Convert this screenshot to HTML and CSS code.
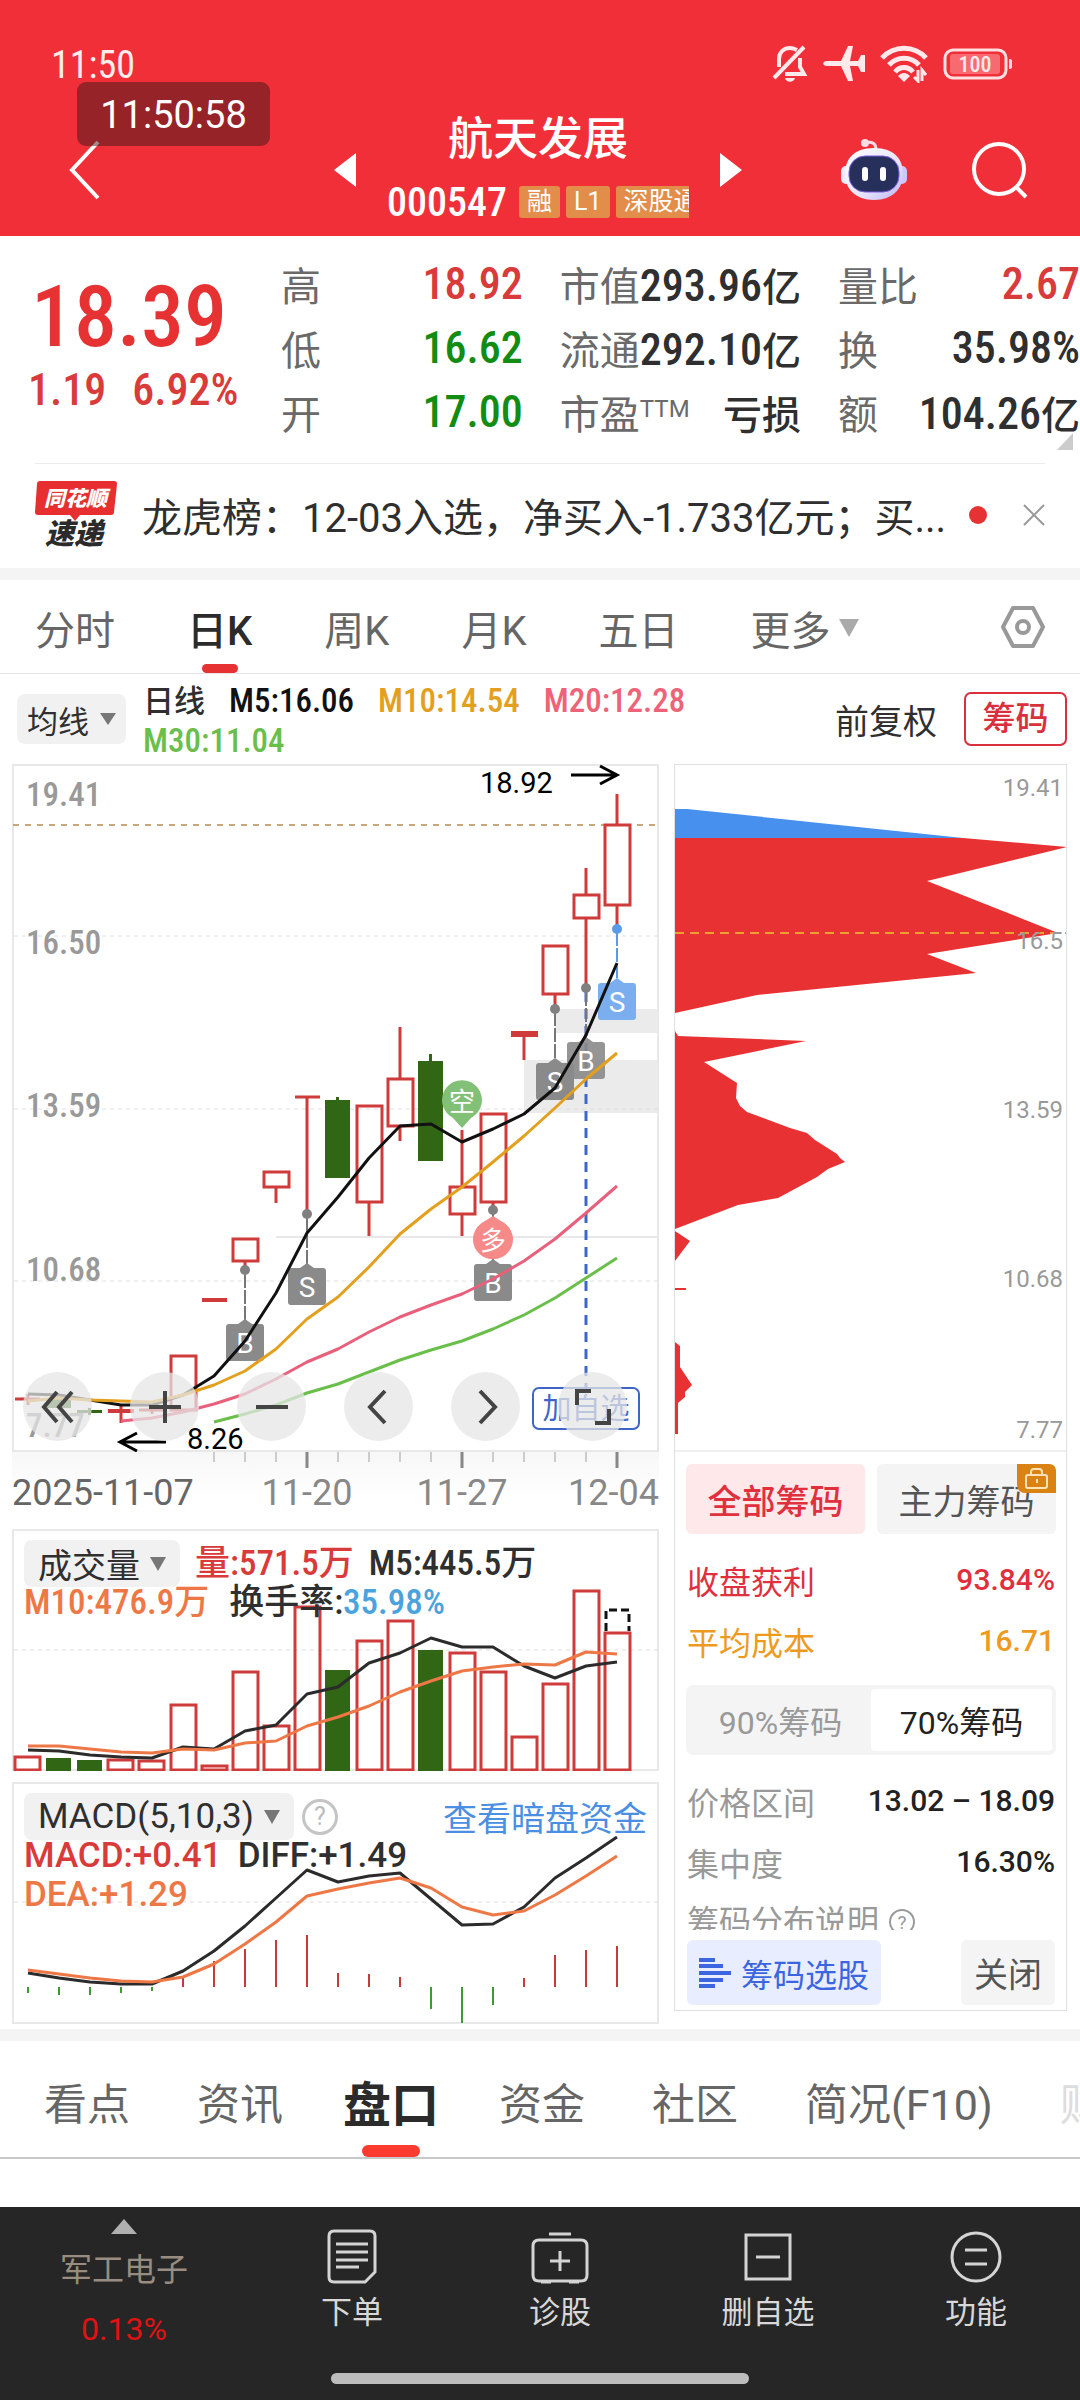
FILE: index.html
```html
<!DOCTYPE html>
<html lang="zh-CN">
<head>
<meta charset="utf-8">
<meta name="viewport" content="width=device-width, initial-scale=1">
<title>航天发展 000547</title>
<link rel="stylesheet" href="styles.css">
</head>
<body>
<header class="top">
  <div class="status">
    <span class="clock">11:50</span>
    <div class="status-icons">
      <svg width="36" height="38" viewBox="0 0 36 38" fill="none" stroke="#ffe9ea" stroke-width="4"><path d="M2 33 32 2"/><path d="M7 22V14C7 7 12 3 18 3c3 0 5 1 7 2M28 13v9l4 7H13"/><path d="M13 33h10c-1 5-9 5-10 0z" fill="#ffe9ea" stroke="none"/></svg>
      <svg width="42" height="38" viewBox="0 0 42 38" fill="#ffe9ea"><path d="M4 16h14L25 1h5l-3 15h8l3-6h4v17h-4l-3-6h-8l3 15h-5l-7-15H4c-5 0-5-5 0-5z"/></svg>
      <svg width="48" height="38" viewBox="0 0 48 38" fill="none" stroke="#ffe9ea" stroke-width="5"><path d="M2 13c12-13 32-13 44 0M9 20c8-9 22-9 30 0M15 27c5-6 13-6 18 0"/><path d="M18 31c4-4 8-4 12 0l-6 6z" fill="#ffe9ea" stroke="none"/><path d="M38 25v11l-4-4M42 36V25l4 5" stroke-width="3"/></svg>
      <svg width="70" height="32" viewBox="0 0 70 32"><rect x="2" y="2" width="61" height="28" rx="8" fill="none" stroke="#ffe0e1" stroke-width="3"/><rect x="7" y="6" width="50" height="20" rx="3" fill="#f76b70"/><path d="M66 11h1q2 0 2 2v6q0 2-2 2h-1z" fill="#ffe0e1"/><text x="32" y="24" class="battery" text-anchor="middle">100</text></svg>
    </div>
  </div>
  <nav class="titlebar">
    <button class="icon-btn back" aria-label="返回"><svg width="40" height="62" viewBox="0 0 40 62" fill="none" stroke="#fff" stroke-width="4"><path d="M34 3 8 31l26 28"/></svg></button>
    <div class="stock">
      <button class="icon-btn" aria-label="上一只"><svg width="22" height="34" viewBox="0 0 22 34"><path d="M22 0v34L0 17z" fill="#fff"/></svg></button>
      <div class="stock-id">
        <h1>航天发展</h1>
        <div class="code"><span>000547</span><i class="tag">融</i><i class="tag">L1</i><i class="tag tag-cut">深股通</i></div>
      </div>
      <button class="icon-btn" aria-label="下一只"><svg width="22" height="34" viewBox="0 0 22 34"><path d="M0 0v34l22-17z" fill="#fff"/></svg></button>
    </div>
    <div class="actions">
      <button class="icon-btn" aria-label="智能助手"><svg width="68" height="64" viewBox="0 0 68 64"><defs><linearGradient id="shell" x1="0" y1="0" x2="1" y2="1"><stop offset="0" stop-color="#fff"/><stop offset=".6" stop-color="#e8e4fb"/><stop offset="1" stop-color="#b9b4f4"/></linearGradient></defs><path d="M24 5c8-2 12 0 12 7" fill="none" stroke="#fbdce6" stroke-width="3"/><circle cx="25" cy="5" r="4" fill="#fbdce6"/><rect x="1" y="28" width="10" height="18" rx="5" fill="#ece9fd"/><rect x="57" y="28" width="10" height="18" rx="5" fill="#ccc8f8"/><path d="M34 10c21 0 29 12 29 26S53 62 34 62 5 50 5 36s8-26 29-26z" fill="url(#shell)"/><rect x="9" y="18" width="50" height="36" rx="16" fill="#27305a" stroke="#7b5fe0" stroke-width="1"/><rect x="22" y="29" width="6" height="14" rx="3" fill="#fff"/><rect x="40" y="29" width="6" height="14" rx="3" fill="#fff"/></svg></button>
      <button class="icon-btn" aria-label="搜索"><svg width="56" height="58" viewBox="0 0 56 58" fill="none" stroke="#fff" stroke-width="4"><circle cx="27" cy="28" r="25"/><path d="m43 45 11 11"/></svg></button>
    </div>
  </nav>
  <div class="toast">11:50:58</div>
</header>

<main>
  <section class="quote">
    <div class="price"><strong>18.39</strong><div><span>1.19</span><span>6.92%</span></div></div>
    <dl>
      <div><dt>高</dt><dd class="up">18.92</dd></div>
      <div><dt>低</dt><dd class="down">16.62</dd></div>
      <div><dt>开</dt><dd class="down">17.00</dd></div>
    </dl>
    <dl>
      <div><dt>市值</dt><dd>293.96<small>亿</small></dd></div>
      <div><dt>流通</dt><dd>292.10<small>亿</small></dd></div>
      <div><dt>市盈<sup>TTM</sup></dt><dd><small>亏损</small></dd></div>
    </dl>
    <dl>
      <div><dt>量比</dt><dd class="up">2.67</dd></div>
      <div><dt>换</dt><dd>35.98%</dd></div>
      <div><dt>额</dt><dd>104.26<small>亿</small></dd></div>
    </dl>
    <svg class="corner" width="16" height="17" viewBox="0 0 16 17"><path d="M16 0v17H0z" fill="#ccc"/></svg>
  </section>

  <section class="news">
    <svg class="brand" width="82" height="67" viewBox="0 0 82 67"><path d="M5 0h74q3 0 3 3l-3 28q0 3-3 3H45l-5 6-5-6H3q-3 0-3-3L2 3q0-3 3-3z" fill="#e72f31"/><text x="9" y="25" class="brand-a">同花顺</text><text x="10" y="63" class="brand-b">速递</text></svg>
    <a href="#news" class="headline">龙虎榜：12-03入选，净买入-1.733亿元；买...</a>
    <span class="dot"></span>
    <button class="icon-btn" aria-label="关闭消息"><svg width="22" height="22" viewBox="0 0 22 22" stroke="#999" stroke-width="2"><path d="m1 1 20 20M21 1 1 21"/></svg></button>
  </section>

  <nav class="periods">
    <a href="#fs">分时</a><a href="#rk" class="on">日K</a><a href="#zk">周K</a><a href="#yk">月K</a><a href="#wr">五日</a><a href="#more">更多<svg width="20" height="18" viewBox="0 0 20 18"><path d="M0 0h20L10 18z" fill="#aaa"/></svg></a>
    <button class="icon-btn" aria-label="设置"><svg width="44" height="42" viewBox="0 0 44 42" fill="none" stroke="#999" stroke-width="4"><path d="M12 2h20l10 19-10 19H12L2 21z" stroke-linejoin="round"/><circle cx="22" cy="21" r="6"/></svg></button>
  </nav>

  <section class="ma">
    <button class="drop">均线<svg width="16" height="12" viewBox="0 0 16 12"><path d="M0 0h16L8 12z" fill="#777"/></svg></button>
    <p class="ma-list"><span>日线</span><span class="m5">M5:16.06</span><span class="m10">M10:14.54</span><span class="m20">M20:12.28</span><br><span class="m30">M30:11.04</span></p>
    <button class="plain">前复权</button>
    <button class="outlined">筹码</button>
  </section>

  <section class="charts">
    <div class="left">
      <div class="panel">
        <svg viewBox="12 764 647 688">
          <rect x="13" y="765" width="645" height="686" fill="#fff" stroke="#e8e8e8" stroke-width="2"/>
          <g fill="#ebebeb"><path d="M555 1009h103v24H555zM524 1060h134v53H524z"/></g>
          <path d="M276 1237h382" stroke="#e8e8e8" stroke-width="2"/>
          <path d="M14 936h644M14 1109h644M14 1281h644" stroke="#e0e0e0" stroke-dasharray="4 4" fill="none"/>
          <path d="M13 825h645" stroke="#c8a878" stroke-width="2" stroke-dasharray="6 6"/>
          <g class="axis-label"><text x="26" y="806">19.41</text><text x="26" y="954">16.50</text><text x="26" y="1117">13.59</text><text x="26" y="1281">10.68</text><text x="26" y="1437">7.77</text></g>
          <g class="candle">
            <path d="M15 1399h25M28 1394v11M108 1411h26M121 1405v18M139 1410h25M152 1406v8" stroke-width="3"/><path d="M108 1411h26M202 1300h25" stroke-width="4"/>
            <path d="M171 1356h25v54h-25zM233 1239h25v22h-25zM245 1261v9M264 1172h25v15h-25zM276 1187v16M295 1097h25M307 1097v118M357 1106h25v96h-25zM369 1202v34M388 1079h25v47h-25zM400 1079v-52M400 1127v14M450 1187h25v27h-25zM462 1187v-57M462 1214v22M481 1114h25v88h-25zM493 1202v8M512 1034h25M524 1034v26M543 946h25v48h-25zM555 994v13M574 895h25v23h-25zM586 895v-27M586 918v69M605 825h25v80h-25zM617 825v-31M617 905v24"/>
            <path d="M511 1034h27" stroke-width="6"/>
          </g>
          <g fill="#316614"><path d="M46 1399h25v9H46zM77 1410h25v3H77zM88 1408h3v7h-3zM325 1100h25v78h-25zM336 1097h3v4h-3zM418 1061h25v100h-25zM429 1054h3v8h-3z"/></g>
          <path d="M586 992v395" stroke="#3e66c8" stroke-width="3" stroke-dasharray="10 7"/>
          <g stroke="#777" stroke-width="2" stroke-dasharray="14 2"><path d="M245 1274v48M307 1218v47M493 1214v48M555 1012v48M586 992v46"/><path d="M617 932v50" stroke="#5a9be8"/></g>
          <g fill="#808080"><circle cx="245" cy="1270" r="5"/><circle cx="307" cy="1214" r="5"/><circle cx="493" cy="1210" r="5"/><circle cx="555" cy="1009" r="5"/><circle cx="586" cy="988" r="5"/><circle cx="617" cy="929" r="5" fill="#5a9be8"/></g>
          <g class="balloon">
            <path d="M462 1128l-9-10a20 20 0 1 1 18 0z" fill="#82c078"/><text x="462" y="1111">空</text>
            <path d="M493 1216l8 5a20 20 0 1 1-16 0z" fill="#f68a88"/><text x="493" y="1250">多</text>
          </g>
          <g class="marker" fill="#8a8a8a">
            <path d="M229 1324h9l7-5 7 5h9q3 0 3 3v31q0 3-3 3h-32q-3 0-3-3v-31q0-3 3-3z"/>
            <path d="M291 1268h9l7-5 7 5h9q3 0 3 3v31q0 3-3 3h-32q-3 0-3-3v-31q0-3 3-3z"/>
            <path d="M477 1264h9l7-5 7 5h9q3 0 3 3v31q0 3-3 3h-32q-3 0-3-3v-31q0-3 3-3z"/>
            <path d="M539 1063h9l7-5 7 5h9q3 0 3 3v31q0 3-3 3h-32q-3 0-3-3v-31q0-3 3-3z"/>
            <path d="M570 1042h9l7-5 7 5h9q3 0 3 3v31q0 3-3 3h-32q-3 0-3-3v-31q0-3 3-3z" fill-opacity=".9"/>
            <path d="M601 983h9l7-5 7 5h9q3 0 3 3v31q0 3-3 3h-32q-3 0-3-3v-31q0-3 3-3z" fill="#7aaeee"/>
            <text x="245" y="1353">B</text><text x="307" y="1297">S</text><text x="493" y="1293">B</text><text x="555" y="1092">S</text><text x="586" y="1071">B</text><text x="617" y="1012">S</text>
          </g>
          <g fill="none" stroke-width="3" stroke-linejoin="round">
            <polyline stroke="#6abf4b" points="214,1422 245,1414 276,1405 307,1393 338,1384 369,1372 400,1360 431,1350 462,1341 493,1329 524,1315 555,1298 586,1278 617,1258"/>
            <polyline stroke="#e8607c" points="121,1421 152,1418 183,1412 214,1404 245,1394 276,1379 307,1362 338,1349 369,1332 400,1317 431,1305 462,1294 493,1279 524,1261 555,1239 586,1213 617,1186"/>
            <polyline stroke="#111" points="28,1394 59,1395 90,1400 121,1405 152,1405 183,1395 214,1376 245,1341 276,1293 307,1233 338,1197 369,1158 400,1126 431,1124 462,1142 493,1129 524,1114 555,1088 586,1035 617,963"/>
            <polyline stroke="#e3a01f" points="28,1401 59,1398 90,1400 121,1401 152,1402 183,1395 214,1385 245,1371 276,1349 307,1319 338,1297 369,1267 400,1234 431,1209 462,1187 493,1162 524,1136 555,1108 586,1079 617,1053"/>
          </g>
          <g class="extreme"><text x="480" y="793">18.92</text><text x="187" y="1449">8.26</text><path d="M571 775h45M600 766l17 9-17 9M166 1442h-45M137 1433l-17 9 17 9"/></g>
        </svg>
        <button class="add">加自选</button>
        <div class="tools">
          <button aria-label="最早"><svg width="36" height="36" viewBox="0 0 36 36"><path d="M17 3 4 18l13 15M32 3 19 18l13 15"/></svg></button>
          <button aria-label="放大"><svg width="36" height="36" viewBox="0 0 36 36"><path d="M2 18h32M18 2v32"/></svg></button>
          <button aria-label="缩小"><svg width="36" height="36" viewBox="0 0 36 36"><path d="M2 18h32"/></svg></button>
          <button aria-label="左移"><svg width="36" height="36" viewBox="0 0 36 36"><path d="M24 2 9 18l15 16"/></svg></button>
          <button aria-label="右移"><svg width="36" height="36" viewBox="0 0 36 36"><path d="m12 2 15 16-15 16"/></svg></button>
          <button aria-label="全屏"><svg width="36" height="36" viewBox="0 0 36 36"><path d="M2 16V2h14M34 20v14H20"/></svg></button>
        </div>
      </div>
      <svg class="dates" viewBox="12 1452 647 77">
        <path d="M214 1452v10M245 1452v10M276 1452v10M338 1452v10M369 1452v10M400 1452v10M431 1452v10M493 1452v10M524 1452v10M555 1452v10M586 1452v10" stroke="#ccc" stroke-width="2"/>
        <path d="M307 1452v16M462 1452v16M617 1452v16" stroke="#888" stroke-width="3"/>
        <text x="12" y="1505" class="first">2025-11-07</text><text x="307" y="1505" text-anchor="middle">11-20</text><text x="462" y="1505" text-anchor="middle">11-27</text><text x="659" y="1505" text-anchor="end">12-04</text>
      </svg>
      <div class="panel volume">
        <svg viewBox="12 1529 647 242">
          <rect x="13" y="1530" width="645" height="240" fill="#fff" stroke="#e8e8e8" stroke-width="2"/>
          <path d="M14 1650h644" stroke="#ddd" stroke-dasharray="4 4"/>
          <path class="candle" d="M15 1757h25v13H15zM108 1760h25v10h-25zM139 1761h25v9h-25zM171 1705h25v65h-25zM202 1766h25v4h-25zM233 1672h25v98h-25zM264 1726h25v44h-25zM295 1607h25v163h-25zM357 1641h25v129h-25zM388 1621h25v149h-25zM450 1653h25v117h-25zM481 1672h25v98h-25zM512 1737h25v33h-25zM543 1684h25v86h-25zM574 1591h25v179h-25zM605 1633h25v137h-25z"/>
          <path d="M46 1758h25v13H46zM77 1760h25v11H77zM325 1670h25v101h-25zM418 1650h25v121h-25z" fill="#316614"/>
          <path d="M606 1631v-21h23v21" fill="none" stroke="#111" stroke-width="3" stroke-dasharray="8 4"/>
          <g fill="none" stroke-width="3" stroke-linejoin="round">
            <polyline stroke="#2b2b2b" points="28,1750 59,1751 90,1755 121,1757 152,1758 183,1747 214,1749 245,1731 276,1725 307,1694 338,1687 369,1663 400,1653 431,1638 462,1647 493,1647 524,1666 555,1678 586,1666 617,1662"/>
            <polyline stroke="#ee7845" points="28,1746 59,1746 90,1749 121,1752 152,1753 183,1749 214,1750 245,1743 276,1741 307,1726 338,1717 369,1706 400,1692 431,1681 462,1671 493,1667 524,1664 555,1665 586,1652 617,1654"/>
          </g>
        </svg>
        <div class="legend">
          <div class="line"><button class="drop">成交量<svg width="16" height="14" viewBox="0 0 16 14"><path d="M0 0h16L8 14z" fill="#777"/></svg></button><span class="up">量:571.5万</span><span>M5:445.5万</span></div>
          <div class="line"><span class="orange">M10:476.9万</span><span>换手率:<b class="blue">35.98%</b></span></div>
        </div>
      </div>
      <div class="panel macd">
        <svg viewBox="12 1782 647 242">
          <rect x="13" y="1783" width="645" height="240" fill="#fff" stroke="#e8e8e8" stroke-width="2"/>
          <path d="M14 1902h644" stroke="#ddd" stroke-dasharray="4 4"/>
          <path d="M28 1987v6M59 1987v8M90 1987v8M121 1987v6M152 1987v4M431 1987v22M462 1987v36M493 1987v18" stroke="#3f9a35" stroke-width="2"/>
          <path d="M183 1987v-9M214 1987v-26M245 1987v-38M276 1987v-47M307 1987v-52M338 1987v-14M369 1987v-13M400 1987v-10M524 1987v-9M555 1987v-32M586 1987v-37M617 1987v-41" stroke="#c63a3a" stroke-width="2"/>
          <g fill="none" stroke-width="3" stroke-linejoin="round">
            <polyline stroke="#2b2b2b" points="28,1973 59,1978 90,1982 121,1984 152,1984 183,1971 214,1951 245,1926 276,1898 307,1870 338,1882 369,1876 400,1873 431,1899 462,1925 493,1924 524,1907 555,1878 586,1858 617,1837"/>
            <polyline stroke="#ee7845" points="28,1970 59,1974 90,1978 121,1981 152,1982 183,1977 214,1964 245,1944 276,1922 307,1896 338,1889 369,1883 400,1878 431,1888 462,1907 493,1915 524,1911 555,1895 586,1876 617,1856"/>
          </g>
        </svg>
        <div class="legend wide">
          <div class="line"><button class="drop">MACD(5,10,3)<svg width="16" height="14" viewBox="0 0 16 14"><path d="M0 0h16L8 14z" fill="#777"/></svg></button><button class="help">?</button><a href="#fund" class="link">查看暗盘资金</a></div>
          <div class="line"><span class="up">MACD:+0.41</span><span>DIFF:+1.49</span></div>
          <div class="line"><span class="orange">DEA:+1.29</span></div>
        </div>
      </div>
    </div>

    <aside class="chips">
      <svg viewBox="674 764 393 688">
        <path d="M675 809h12l276 29H675z" fill="#4890ee"/>
        <path fill="#e83132" d="M675 838h288l104 9-140 34 131 52-131 21 49 19-219 22-82 18zM675 1031l3 5 128 5-102 21 33 21-1 15 4 8 7 6 43 16 17 5 8 7 22 14 3 4 5 4-17 7-11 8-39 21-40 7-63 24zM675 1231l15 10-15 20zM675 1288h11v2h-11zM675 1342l5 4v21l12 18-7 7v5l-7 6v31h-3z"/>
        <path d="M675 933h392" stroke="#f0a030" stroke-dasharray="9 6" stroke-width="2"/>
        <g class="chip-label"><text x="1063" y="796">19.41</text><text x="1063" y="949">16.5</text><text x="1063" y="1118">13.59</text><text x="1063" y="1287">10.68</text><text x="1063" y="1438">7.77</text></g>
        <path d="M674 1451h393" stroke="#e0e0e0"/>
      </svg>
      <div class="chip-pane">
        <div class="pair"><button class="all">全部筹码</button><button class="main-force">主力筹码<span class="lock"><svg width="24" height="22" viewBox="0 0 24 22" fill="none" stroke="#ffe3b5" stroke-width="2"><rect x="1" y="7" width="21" height="13" rx="2"/><path d="M6 7V4q0-3 3-3h5q3 0 3 3v3M12 11v4"/></svg></span></button></div>
        <dl class="facts"><div class="profit"><dt>收盘获利</dt><dd>93.84%</dd></div><div class="cost"><dt>平均成本</dt><dd>16.71</dd></div></dl>
        <div class="segment"><button>90%筹码</button><button class="on">70%筹码</button></div>
        <dl class="facts"><div><dt>价格区间</dt><dd>13.02 – 18.09</dd></div><div><dt>集中度</dt><dd>16.30%</dd></div><div class="cut"><dt>筹码分布说明 <svg width="26" height="26" viewBox="0 0 26 26"><circle cx="13" cy="13" r="12" fill="none" stroke="#999" stroke-width="2"/><text x="13" y="20" text-anchor="middle" font-size="19" fill="#999">?</text></svg></dt></div></dl>
        <div class="foot"><button class="pick"><svg width="32" height="32" viewBox="0 0 32 32" stroke="#3c66e0" stroke-width="4"><path d="M0 3h16M0 9h24M0 16h32M0 23h24M0 29h16"/></svg>筹码选股</button><button class="close">关闭</button></div>
      </div>
    </aside>
  </section>

  <nav class="sections">
    <a href="#kd">看点</a><a href="#zx">资讯</a><a href="#pk" class="on">盘口</a><a href="#zj">资金</a><a href="#sq">社区</a><a href="#f10">简况(F10)</a><a href="#cw" class="fade">财务</a>
  </nav>
</main>

<footer class="bottom">
  <div class="tabs">
    <a href="#sector" class="sector"><svg width="26" height="15" viewBox="0 0 26 15"><path d="M13 0l13 15H0z" fill="#b0b0b0"/></svg><span>军工电子</span><span class="pct">0.13%</span></a>
    <a href="#order"><svg width="50" height="56" viewBox="0 0 50 56"><path d="M7 2h36q5 0 5 5v36l-10 10H7q-5 0-5-5V7q0-5 5-5zM9 15h32M9 23h32M9 31h32M9 38h23"/></svg><span>下单</span></a>
    <a href="#diag"><svg width="58" height="56" viewBox="0 0 58 56"><path d="M18 5h22M8 11h42q6 0 6 6v29q0 6-6 6H8q-6 0-6-6V17q0-6 6-6zM29 22v20M19 32h20"/><path d="M10 53h10M38 53h10" stroke-width="5"/></svg><span>诊股</span></a>
    <a href="#del"><svg width="50" height="56" viewBox="0 0 50 56"><path d="M3 6h44v44H3zM13 28h24"/></svg><span>删自选</span></a>
    <a href="#func"><svg width="52" height="56" viewBox="0 0 52 56"><circle cx="26" cy="28" r="24"/><path d="M15 21h22M15 35h22"/></svg><span>功能</span></a>
  </div>
  <div class="homebar"></div>
</footer>
</body>
</html>
```
FILE: styles.css
```css
* { box-sizing: border-box; }
body, h1, p, dl, dd { margin: 0; }
body {
  min-height: 100vh;
  display: flex;
  flex-direction: column;
  background: #fff;
  color: #2f2f2f;
  font-family: Roboto, "Noto Sans CJK SC", sans-serif;
  overflow-x: hidden;
}
main { flex: 1; }
a { color: inherit; text-decoration: none; }
button { font: inherit; color: inherit; border: 0; padding: 0; background: none; white-space: nowrap; }
svg { display: block; }
.icon-btn { display: flex; }
.up { color: #d93a3a; }
.down { color: #128c12; }
.orange { color: #ee7845; }

/* header */
.top { position: relative; background: #f12f38; color: #fff; height: 236px; padding-top: 36px; }
.status { display: flex; justify-content: space-between; align-items: center; height: 56px; padding: 0 67px 0 51px; }
.clock { font: 38px "Roboto Condensed", sans-serif; color: #ffeded; padding-top: 2px; }
.status-icons { display: flex; align-items: center; gap: 15px; }
.battery { font: 500 22px "Roboto Condensed", sans-serif; fill: #ffe9ea; }
.toast { position: absolute; left: 77px; top: 82px; width: 193px; height: 64px; border-radius: 9px; background: rgba(60, 24, 24, .5); font-size: 38px; line-height: 66px; text-align: center; }
.titlebar { display: grid; grid-template-columns: 1fr auto 1fr; align-items: center; height: 144px; padding: 12px 52px 0 48px; }
.back { margin-left: 16px; }
.stock { display: flex; align-items: center; gap: 31px; }
.stock-id { width: 302px; padding-top: 4px; }
.stock-id h1 { font-size: 45px; line-height: 60px; font-weight: 500; text-align: center; }
.code { display: flex; align-items: center; gap: 6px; height: 64px; overflow: hidden; font: 500 40px "Roboto Condensed", sans-serif; }
.code span { margin-right: 6px; }
.tag { flex: none; height: 32px; padding: 0 8px; border-radius: 3px; background: #e38d4b; font: 25px/32px Roboto, "Noto Sans CJK SC", sans-serif; }
.tag-cut { padding-right: 0; }
.actions { display: flex; justify-content: flex-end; align-items: center; gap: 64px; }

/* quote */
.quote { position: relative; display: grid; grid-template-columns: 216fr 242fr 241fr 242fr; column-gap: 37px; padding: 16px 0 19px 28px; height: 227px; font: 500 44px "Roboto Condensed", "Noto Sans CJK SC", sans-serif; }
.quote dl div { display: flex; justify-content: space-between; align-items: center; height: 64px; white-space: nowrap; }
.quote dt { font: 40px "Noto Sans CJK SC", sans-serif; color: #6a6a6a; }
.quote small { font: 500 39px "Noto Sans CJK SC", sans-serif; }
.quote sup { font: 24px Roboto, sans-serif; vertical-align: 12px; }
.price { color: #d93a3a; padding-top: 16px; white-space: nowrap; }
.price strong { display: block; font-size: 86px; line-height: 98px; font-weight: 500; color: #e63232; padding-left: 3px; }
.price div { display: flex; gap: 26px; line-height: 48px; }
.corner { position: absolute; right: 7px; bottom: 13px; }

/* news strip */
.news { display: flex; align-items: center; height: 105px; margin: 0 35px; padding-bottom: 3px; border-top: 1px solid #ebebeb; }
.headline { flex: 1; margin-left: 25px; font-size: 40px; white-space: nowrap; overflow: hidden; }
.brand { overflow: visible; }
.brand-a { font: italic 900 21px "Noto Sans CJK SC", sans-serif; fill: #fff; }
.brand-b { font: italic 900 29px "Noto Sans CJK SC", sans-serif; fill: #2b2b2b; }
.dot { width: 18px; height: 18px; border-radius: 50%; background: #e63232; margin-right: 36px; }

/* period tabs */
.periods { display: flex; align-items: center; height: 106px; border-top: 12px solid #f4f4f4; border-bottom: 1px solid #e5e5e5; padding: 0 35px; gap: 72px; font-size: 40px; color: #666; }
.periods a { position: relative; display: flex; align-items: center; gap: 8px; height: 93px; padding-top: 2px; white-space: nowrap; }
.periods .on { font-weight: 500; color: #2b2b2b; }
.periods .on::after { content: ""; position: absolute; bottom: 0; left: 50%; margin-left: -18px; width: 36px; height: 9px; border-radius: 5px; background: #e63232; }
.periods .icon-btn { margin-left: auto; }

/* moving averages */
.ma { display: flex; align-items: center; height: 90px; padding: 0 13px 0 17px; }
.drop { display: flex; align-items: center; background: #f1f1f1; border-radius: 8px; color: #2f2f2f; }
.ma .drop { height: 50px; padding: 0 10px; gap: 11px; font-size: 31px; }
.ma-list { flex: 1; margin-left: 17px; padding-top: 3px; font: 500 33px/39px "Roboto Condensed", "Noto Sans CJK SC", sans-serif; white-space: nowrap; }
.ma-list span { margin-right: 24px; }
.ma-list span:first-child { font-size: 31px; }
.m5 { color: #111; } .m10 { color: #e3a01f; } .m20 { color: #ee6378; } .m30 { color: #6abf4b; }
.plain { font-size: 34px; margin-right: 27px; }
.outlined { width: 103px; height: 54px; border: 2px solid #d8303c; border-radius: 7px; color: #d8303c; font-size: 33px; line-height: 48px; font-weight: 500; }

/* charts */
.charts { display: grid; grid-template-columns: 647fr 393fr; gap: 15px; padding: 0 13px 5px 12px; align-items: start; }
.left > svg, .panel > svg, .chips > svg { width: 100%; height: auto; }
.panel { position: relative; }
.candle { fill: none; stroke: #cf3a3a; stroke-width: 3; }
.axis-label { font: 500 33px "Roboto Condensed", sans-serif; fill: #999; }
.extreme { font-size: 29px; fill: #000; }
.extreme path { fill: none; stroke: #000; stroke-width: 3; }
.marker text { font-size: 28px; fill: #fff; text-anchor: middle; }
.balloon text { font: 26px "Noto Sans CJK SC", sans-serif; fill: #fff; text-anchor: middle; }
.tools { position: absolute; left: 11px; right: 32px; bottom: 11px; display: flex; justify-content: space-between; }
.tools button { width: 69px; height: 69px; border-radius: 50%; background: rgba(230, 230, 230, .75); display: grid; place-items: center; }
.tools path { fill: none; stroke: #444; stroke-width: 4; }
.add { position: absolute; right: 19px; bottom: 22px; width: 108px; height: 43px; border: 2px solid #3e66c8; border-radius: 7px; color: #3e66c8; font-size: 29px; line-height: 38px; }
.dates { background: linear-gradient(#f7f7f7, #fff 60%); font-size: 36px; fill: #888; }
.dates .first { fill: #666; }
.macd { margin-top: 11px; }
.legend { position: absolute; left: 12px; top: 11px; right: 12px; font: 500 35px/39px "Roboto Condensed", "Noto Sans CJK SC", sans-serif; }
.line { display: flex; align-items: center; gap: 20px; height: 39px; white-space: nowrap; }
.line:first-child { height: 47px; gap: 15px; margin-bottom: -4px; }
.legend .drop { height: 47px; gap: 10px; padding: 0 14px; font: 34px Roboto, "Noto Sans CJK SC", sans-serif; }
.blue { color: #4ba3de; font-weight: 500; }
.wide .line { font: 500 35px Roboto, sans-serif; gap: 16px; }
.wide .line:first-child { gap: 8px; }
.wide .drop { font-size: 35px; }
.help { width: 36px; height: 36px; border: 3px solid #c4c4c4; border-radius: 50%; color: #bbb; font-size: 25px; line-height: 30px; font-weight: 400; }
.link { margin-left: auto; color: #4a8fe2; font: 34px "Noto Sans CJK SC", sans-serif; }

/* chip distribution */
.chips { outline: 1px solid #e0e0e0; outline-offset: -1px; }
.chip-label { font-size: 24px; fill: #999; text-anchor: end; }
.chip-pane { padding: 12px 11px 6px 12px; font-size: 32px; }
.pair { display: grid; grid-template-columns: 1fr 1fr; gap: 12px; }
.pair button { position: relative; height: 70px; border-radius: 6px; background: #f4f4f4; color: #555; font-size: 34px; overflow: hidden; }
.pair .all { background: #ffe8ea; color: #e0303e; font-weight: 500; }
.lock { position: absolute; right: 0; top: 0; width: 39px; height: 29px; display: grid; place-items: center; background: #da8212; border-radius: 0 6px 0 8px; }
.facts { padding: 15px 1px 0; }
.facts div { display: flex; justify-content: space-between; align-items: center; height: 61px; color: #222; }
.facts dt { display: flex; gap: 10px; align-items: center; color: #999; white-space: nowrap; font-size: 32px; }
.facts dd { font-weight: 500; font-size: 30px; white-space: nowrap; }
.facts .profit, .facts .profit dt { color: #e0303e; }
.facts .cost, .facts .cost dt { color: #ee9a1e; }
.facts .cut { height: 38px; overflow: hidden; align-items: flex-start; }
.facts .cut dt { line-height: 60px; }
.segment { display: grid; grid-template-columns: 1fr 1fr; height: 70px; margin-top: 14px; padding: 4px; background: #f4f4f4; border-radius: 7px; color: #999; }
.segment .on { background: #fff; border-radius: 4px; color: #222; }
.foot { display: flex; justify-content: space-between; padding: 10px 1px 0; }
.foot button { height: 65px; border-radius: 6px; }
.foot .pick { display: flex; align-items: center; gap: 10px; padding: 0 12px; background: #e8eeff; color: #3c66e0; }
.foot .close { width: 94px; background: #f4f4f4; color: #555; font-size: 34px; }

/* section tabs */
.sections { display: flex; align-items: center; height: 130px; padding-left: 44px; gap: 67px; border-top: 12px solid #f4f4f4; border-bottom: 2px solid #c8c8c8; font-size: 43px; color: #666; overflow: hidden; }
.sections a { position: relative; display: flex; align-items: center; flex: none; height: 116px; padding-top: 4px; }
.sections .on { font-size: 48px; font-weight: 700; color: #2b2b2b; margin: 0 -7px; }
.sections .on::after { content: ""; position: absolute; bottom: 0; left: 50%; margin-left: -29px; width: 58px; height: 12px; border-radius: 6px; background: #fb3a30; }
.sections .fade { color: #ddd; }

/* bottom bar */
.bottom { background: #262626; color: #d8d8d8; height: 193px; }
.tabs { display: grid; grid-template-columns: 248fr 208fr 208fr 208fr 208fr; height: 166px; font-size: 31px; }
.tabs a { display: flex; flex-direction: column; align-items: center; padding-top: 22px; line-height: 46px; gap: 5px; }
.tabs path, .tabs circle { fill: none; stroke: #d4d4d4; stroke-width: 3; }
.tabs .sector { padding-top: 12px; color: #988d80; font-size: 32px; gap: 13px; }
.tabs .sector path { fill: #b0b0b0; stroke: none; }
.tabs .pct { color: #e01212; }
.homebar { width: 418px; max-width: 50%; height: 11px; margin: 0 auto; border-radius: 6px; background: #bdbdbd; }
```
